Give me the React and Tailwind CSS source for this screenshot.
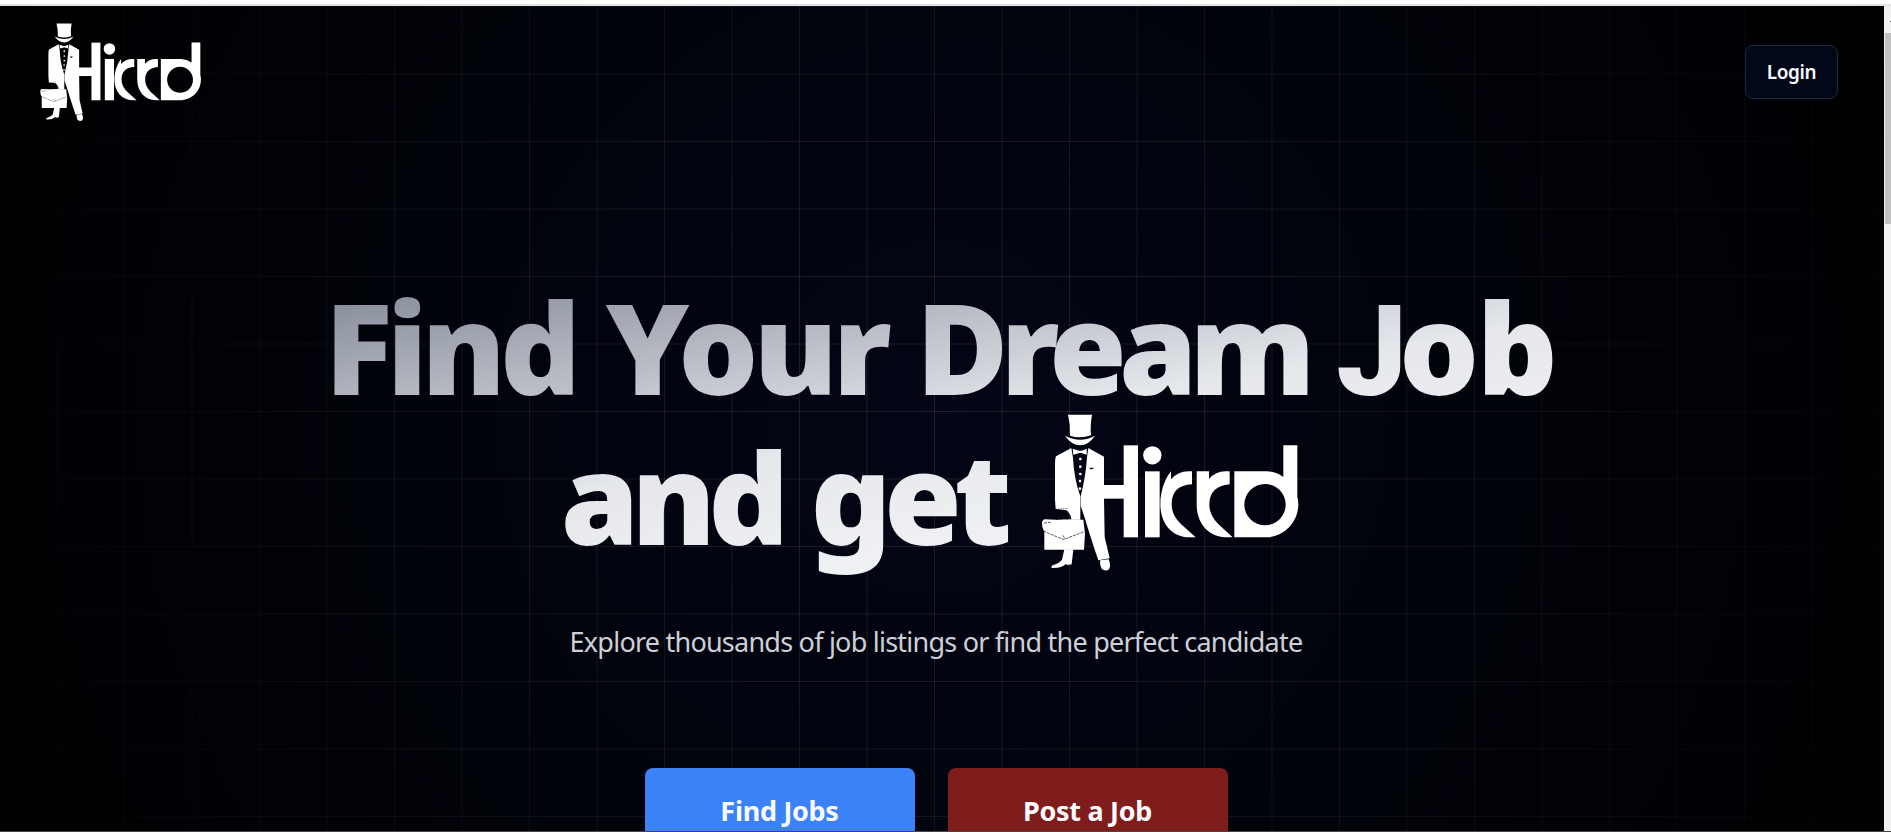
function Logo({ className }) {
  return (
    <svg viewBox="60 38 780 480" className={className} fill="#fff" aria-label="Hirrd">
      {/* top hat */}
      <path d="M144 43H216Q210 78 213 105Q181 116 150 106Q152 75 144 43Z" />
      <path d="M135 106Q181 130 225 106Q206 134 181 135Q154 134 135 106Z" />
      {/* bow tie and shirt studs */}
      <path d="M158 145L177 151H185L200 145V163L184 158H178L160 163Z" />
      <circle cx="181" cy="176" r="4" />
      <circle cx="181" cy="199" r="4" />
      <circle cx="181" cy="221" r="4" />
      <circle cx="180" cy="242" r="4" />
      <circle cx="180" cy="265" r="4" />
      {/* coat and trousers */}
      <path d="M154 143L108 168Q105 172 105 200V298L107 326L140 330Q150 338 150 358H181V288Q162 235 159 172Z" />
      <path d="M205 143L252 169V295L254 410L269 474L235 480Q208 400 196 358L182 316V288Q198 225 201 170Z" />
      <path d="M208 202H222L217 207H211Z" fill="#020611" />
      <path d="M103 300V326M108 327L144 324M112 332L146 336" stroke="#020611" strokeWidth="2" fill="none" strokeDasharray="4 3" />
      {/* briefcase */}
      <path d="M66 364L72 357L110 358L148 357L190 358L195 400L192 448H73V395L67 380Z" />
      <path d="M110 358Q111 334 130 334Q150 335 152 357" stroke="#020611" strokeWidth="4" fill="none" />
      <path d="M120 357Q120 345 131 345Q141 345 142 357" stroke="#020611" strokeWidth="5" fill="none" strokeDasharray="9 2" />
      <path d="M72 368L92 366M70 392L128 417L138 415L192 394M128 405L137 416" stroke="#020611" strokeWidth="2" fill="none" strokeDasharray="9 3" />
      {/* shoes */}
      <path d="M133 447H160L155 492L142 494L137 491Q126 504 96 503Q90 499 100 494Q119 488 126 478Z" />
      <path d="M240 480L266 477Q274 496 267 507Q258 514 247 507Q240 502 240 480Z" />
      {/* wordmark */}
      <rect x="250" y="254" width="64" height="41" />
      <rect x="311" y="135" width="43" height="276" />
      <circle cx="397" cy="165" r="27.5" />
      <rect x="375" y="213" width="44" height="198" />
      <path d="M453 213V237Q475 213 505 213H516V252Q455 255 455 312Q455 345 482 370L527 411H508C455 411 421 368 421 312C421 270 437 232 453 213Z" />
      <path d="M530 213H567V236Q587 213 616 213H629V252Q568 258 568 312Q568 345 594 370L638 411H620C567 411 530 370 530 312Z" />
      <path
        fillRule="evenodd"
        d="M643 213H741Q768 214 790 230V135H832V290Q835 300 835 312A99 99 0 0 1 742 411H643ZM797 313A62 62 0 1 0 673 313A62 62 0 1 0 797 313Z"
      />
    </svg>
  );
}

export default function App() {
  return (
    <div className="flex h-[832px] w-[1891px] flex-col overflow-hidden bg-white font-['Noto_Sans',sans-serif]">
      <div className="h-[6px] shrink-0 border-b-2 border-[#dfe3e1] bg-white" />
      <div className="flex h-[825px] shrink-0">
        <div className="flex w-[1884px] flex-col overflow-hidden bg-[#020615] bg-[radial-gradient(circle,rgba(0,0,0,0)_0%,#000_104%),linear-gradient(to_right,rgba(255,255,255,0.11)_1px,transparent_1px),linear-gradient(to_right,rgba(255,255,255,0.05)_2px,transparent_2px),linear-gradient(to_bottom,rgba(255,255,255,0.11)_1px,transparent_1px),linear-gradient(to_bottom,rgba(255,255,255,0.05)_2px,transparent_2px)] bg-size-[100%_100%,135px_135px,135px_135px,135px_135px,135px_135px] bg-position-[0_0,124px_0,56px_0,0_0,0_67px]">
          <header className="flex items-start justify-between pt-[16px] pr-[46px] pl-[39px]">
            <Logo className="h-[101px] w-[163px]" />
            <button className="mt-[23px] h-[54px] w-[93px] rounded-lg border border-[#1e293b] bg-[#020817] text-[18.9px] font-semibold tracking-[-0.3px] text-[#f8fafc]">
              Login
            </button>
          </header>
          <main className="flex flex-col px-[54px] pt-[149px]">
            <h1 className="flex h-[310px] flex-col items-center bg-linear-to-br/srgb from-gray-500 via-gray-200 to-white bg-clip-text text-[126px] leading-[149px] font-black tracking-[-7.7px] text-transparent [word-spacing:4px]">
              <span className="h-[150px] pr-[4px] whitespace-nowrap">
                <span className="tracking-[-6px]">Find </span>
                <span className="tracking-[-5px]">Your</span>{" "}
                <span className="tracking-[-8px]">Dream </span>
                <span className="tracking-[-2.5px]">
                  <span className="font-['Roboto'] tracking-[-8px]">J</span>ob
                </span>
              </span>
              <span className="flex h-[150px] items-start pr-[23px] whitespace-nowrap">
                and get
                <Logo className="-mt-[9px] ml-[36px] h-[160px] w-[260px] shrink-0" />
              </span>
            </h1>
            <p className="mt-[42px] pr-[12px] text-center text-[27px] leading-9 tracking-[-0.77px] whitespace-nowrap text-[#cdd0d6]">
              Explore thousands of job listings or find the perfect candidate
            </p>
            <div className="mt-[108px] flex justify-center gap-[33px] pr-[12px]">
              <button className="h-[86px] w-[270px] rounded-lg bg-[#3b82f6] text-[27px] font-bold tracking-[-0.3px] text-[#f8fafc]">
                Find Jobs
              </button>
              <button className="h-[86px] w-[280px] rounded-lg bg-[#7f1d1d] text-[27px] font-bold tracking-[-0.3px] text-[#f8fafc]">
                Post a Job
              </button>
            </div>
          </main>
        </div>
        <div className="flex w-[7px] flex-col items-end bg-[#f1f1f1]">
          <div className="mt-[15px] h-px w-px bg-[#505050]" />
          <div className="mt-[11px] h-[191px] w-[6px] bg-[#c1c1c1]" />
        </div>
      </div>
      <div className="h-px shrink-0 bg-[#4a4443]" />
    </div>
  );
}
